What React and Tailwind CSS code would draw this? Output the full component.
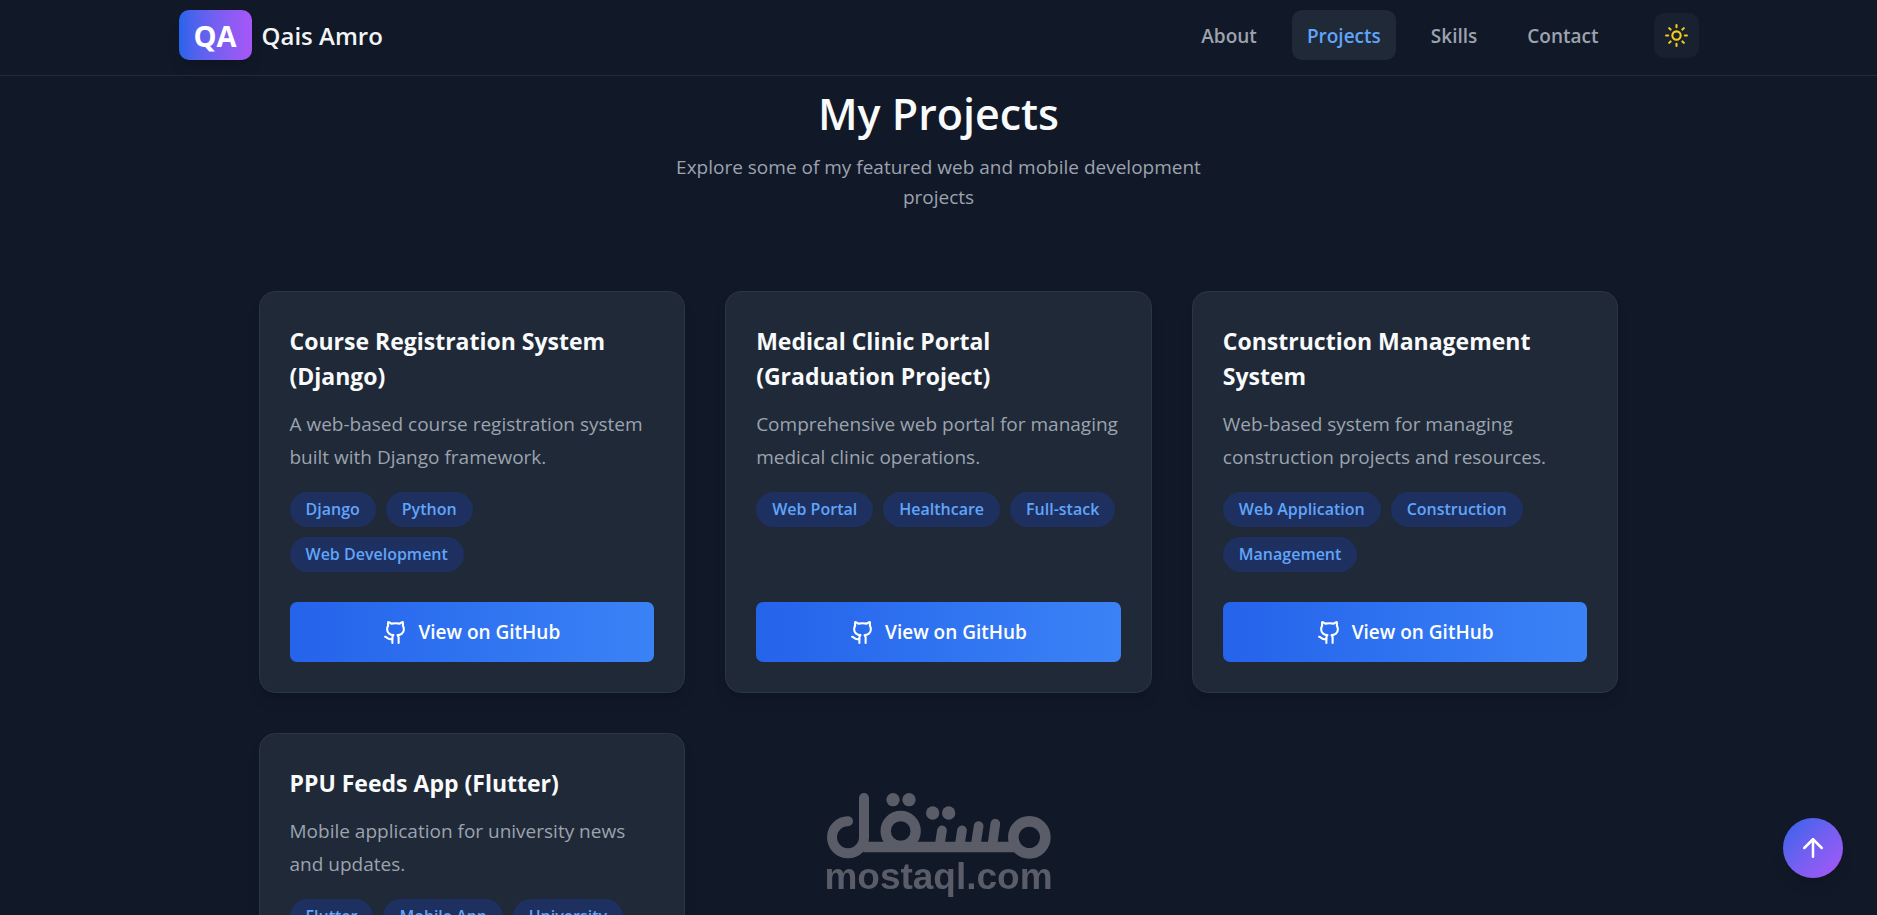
import React from 'react';
import { ArrowUp, Github, Sun } from 'lucide-react';

const navItems = ['About', 'Projects', 'Skills', 'Contact'];

const projects = [
    {
        title: 'Course Registration System (Django)',
        description: 'A web-based course registration system built with Django framework.',
        tags: ['Django', 'Python', 'Web Development'],
    },
    {
        title: 'Medical Clinic Portal (Graduation Project)',
        description: 'Comprehensive web portal for managing medical clinic operations.',
        tags: ['Web Portal', 'Healthcare', 'Full-stack'],
    },
    {
        title: 'Construction Management System',
        description: 'Web-based system for managing construction projects and resources.',
        tags: ['Web Application', 'Construction', 'Management'],
    },
    {
        title: 'PPU Feeds App (Flutter)',
        description: 'Mobile application for university news and updates.',
        tags: ['Flutter', 'Mobile App', 'University'],
    },
];

const Header = () => (
    <header className="fixed inset-x-0 top-0 z-20 border-b border-[#232c3a] bg-[#111827]">
        <div className="mx-auto flex max-w-[1520px] items-center justify-between pt-[10px] pb-[15px]">
            <a href="#home" className="flex items-center gap-[10px]">
                <span className="flex h-[50px] items-center rounded-[10px] bg-linear-to-r from-[#2563eb] to-[#a855f7] px-[15px] pt-[2px] text-[29px] font-bold text-white shadow-lg">
                    QA
                </span>
                <span className="pt-[2px] text-[24px] font-semibold text-gray-100">Qais Amro</span>
            </a>
            <div className="flex items-center gap-10">
                <nav className="flex items-center gap-5">
                    {navItems.map((item) => (
                        <a
                            key={item}
                            href={`#${item.toLowerCase()}`}
                            className={`flex h-[50px] items-center rounded-[10px] px-[15px] pt-[2px] text-[19px] font-semibold ${
                                item === 'Projects' ? 'bg-[#1f2937] text-[#60a5fa]' : 'text-[#9ca3af]'
                            }`}
                        >
                            {item}
                        </a>
                    ))}
                </nav>
                <button
                    type="button"
                    aria-label="Toggle theme"
                    className="flex size-[45px] items-center justify-center rounded-[10px] bg-[#18212f] text-[#facc15]"
                >
                    <Sun size={25} />
                </button>
            </div>
        </div>
    </header>
);

const ProjectCard = ({ project }) => (
    <article className="flex flex-col rounded-2xl border border-[#2b3544] bg-[#1f2937] px-[30px] pt-8 pb-[30px] shadow-lg">
        <h3 className="text-[23px] leading-[35px] font-bold text-gray-50">{project.title}</h3>
        <p className="mt-[14px] text-[19px] leading-[33px] text-[#9ca3af]">{project.description}</p>
        <ul className="mt-[18px] mb-[30px] flex flex-wrap gap-[10px]">
            {project.tags.map((tag) => (
                <li
                    key={tag}
                    className="rounded-full bg-[#1e3060] px-4 text-[16px] leading-[35px] font-semibold text-[#60a5fa]"
                >
                    {tag}
                </li>
            ))}
        </ul>
        <a
            href="#github"
            className="mt-auto flex h-[60px] items-center justify-center gap-[10px] rounded-[7px] bg-linear-to-r from-[#2563eb] to-[#3b82f6] text-[19px] font-semibold text-white"
        >
            <Github size={25} />
            View on GitHub
        </a>
    </article>
);

const Watermark = () => (
    <div className="pointer-events-none fixed inset-x-0 bottom-[20px] z-10 flex flex-col items-center text-[#5a5d68]">
        <svg width="226" height="67" viewBox="0 0 678 201" fill="none" stroke="currentColor" aria-hidden="true">
            <path d="M66 88A48 48 0 1 0 114 136V18" strokeWidth="30" strokeLinecap="round" />
            <circle cx="224" cy="117" r="45" strokeWidth="31" />
            <circle cx="610" cy="136" r="48" strokeWidth="32" />
            <path d="M112 165H570" strokeWidth="32" />
            <path d="M348 115L341 160M408 115L401 160M458 102L449 160M508 95L499 160" strokeWidth="29" strokeLinecap="round" />
            <g fill="currentColor" stroke="none">
                <circle cx="201" cy="23" r="20" />
                <circle cx="249" cy="23" r="20" />
                <circle cx="320" cy="63" r="20" />
                <circle cx="368" cy="63" r="20" />
            </g>
        </svg>
        <span className="font-['Liberation_Sans',Arial,sans-serif] text-[37px] leading-9 font-bold">mostaql.com</span>
    </div>
);

const App = () => (
    <div className="h-screen overflow-hidden bg-[#111827] font-['Open_Sans','Noto_Sans',sans-serif]">
        <Header />
        <main className="mx-auto max-w-[1360px] pt-[84px]">
            <div className="mx-auto max-w-[600px] text-center">
                <h1 className="text-[43px] leading-[60px] font-semibold text-gray-50">My Projects</h1>
                <p className="mt-2 text-[19px] leading-[30px] text-[#9ca3af]">
                    Explore some of my featured web and mobile development projects
                </p>
            </div>
            <section className="mt-[79px] grid grid-cols-3 gap-10">
                {projects.map((project) => (
                    <ProjectCard key={project.title} project={project} />
                ))}
            </section>
        </main>
        <Watermark />
        <button
            type="button"
            aria-label="Back to top"
            className="fixed right-[34px] bottom-[37px] z-20 flex size-[60px] items-center justify-center rounded-full bg-linear-to-br from-[#2563eb] to-[#a855f7] text-white shadow-lg"
        >
            <ArrowUp size={30} />
        </button>
    </div>
);

export default App;
